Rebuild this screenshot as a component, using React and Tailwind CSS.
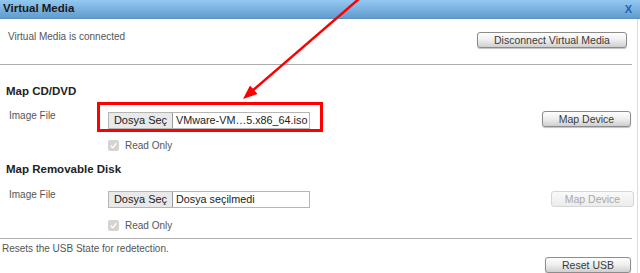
import React from "react";

function Btn({ children, className = "", disabled = false }) {
  return (
    <div
      className={
        "flex items-center justify-center whitespace-nowrap rounded-[3px] border text-[10.5px] leading-none " +
        (disabled
          ? "border-[#d6d6d6] bg-gradient-to-b from-[#fafafa] to-[#ececec] text-[#a8a8a8] "
          : "border-[#8c8c8c] bg-gradient-to-b from-[#fefefe] via-[#eeeeee] to-[#cfcfcf] text-[#3a3a3a] shadow-[0_1px_1px_rgba(0,0,0,0.25)] ") +
        className
      }
    >
      {children}
    </div>
  );
}

function FileInput({ value }) {
  return (
    <div className="flex h-[17px] w-[202px] items-stretch overflow-hidden whitespace-nowrap border border-[#b5b5b5] bg-white text-[11px] leading-none">
      <div className="flex w-[64px] shrink-0 items-center justify-center border-r border-[#9a9a9a] bg-[#e9e9e9] text-[#222]">
        Dosya Seç
      </div>
      <div className="flex items-center pl-[3px] text-[10.8px] text-[#222]">{value}</div>
    </div>
  );
}

function ReadOnly() {
  return (
    <div className="flex h-[12px] items-center pl-[108px]">
      <span className="flex h-[11px] w-[11px] items-center justify-center rounded-[2px] bg-[#d4d4d4]">
        <svg width="9" height="9" viewBox="0 0 10 10">
          <path d="M2 5.2 L4.2 7.4 L8.2 2.6" fill="none" stroke="#fff" strokeWidth="1.6" />
        </svg>
      </span>
      <span className="ml-[6px] text-[10px] text-[#555]">Read Only</span>
    </div>
  );
}

export default function App() {
  return (
    <div className="relative h-[273px] w-[640px] overflow-hidden bg-white font-['Liberation_Sans',Arial,sans-serif]">
      <div className="flex h-[19px] items-center justify-between border-b border-[#5a8fbf] bg-gradient-to-b from-[#93c8f1] to-[#629bcd] pl-[3px] pr-[8px]">
        <span className="text-[11.5px] font-bold text-[#1a1a1a]">Virtual Media</span>
        <span className="text-[11px] font-bold text-[#1a64b8]">X</span>
      </div>

      <div className="h-[254px] w-[638px] border-r border-[#cfe0f2]">
        <div className="flex h-[45px] items-start justify-between pl-[8px] pr-[10px]">
          <span className="mt-[12px] text-[10px] leading-[12px] text-[#555]">Virtual Media is connected</span>
          <Btn className="mt-[13px] h-[16px] w-[150px]">Disconnect Virtual Media</Btn>
        </div>
        <div className="h-px w-[632px] bg-[#adadad]" />

        <div className="mt-[19px] pl-[6px] text-[11.5px] font-bold leading-[14px] text-[#222]">Map CD/DVD</div>
        <div className="mt-[12px] flex items-start justify-between pr-[6px]">
          <div className="flex items-start">
            <span className="w-[108px] pl-[9px] text-[10px] leading-[12px] text-[#555]">Image File</span>
            <div className="mt-[2px]">
              <FileInput value="VMware-VM…5.x86_64.iso" />
            </div>
          </div>
          <Btn className="mt-[1px] h-[16px] w-[89px]">Map Device</Btn>
        </div>
        <div className="mt-[10px]">
          <ReadOnly />
        </div>

        <div className="mt-[11px] pl-[6px] text-[11.5px] font-bold leading-[14px] text-[#222]">Map Removable Disk</div>
        <div className="mt-[13px] flex items-start justify-between pr-[3px]">
          <div className="flex items-start">
            <span className="w-[108px] pl-[9px] text-[10px] leading-[12px] text-[#555]">Image File</span>
            <div className="mt-[2px]">
              <FileInput value="Dosya seçilmedi" />
            </div>
          </div>
          <Btn disabled className="mt-[2px] h-[16px] w-[83px]">Map Device</Btn>
        </div>
        <div className="mt-[11px]">
          <ReadOnly />
        </div>
        <div className="mt-[7px] h-px w-[632px] bg-[#adadad]" />
        <div className="mt-[4px] pl-[2px] text-[10px] leading-[12px] text-[#555]">Resets the USB State for redetection.</div>
        <div className="mt-[2px] flex justify-end pr-[6px]">
          <Btn className="h-[16px] w-[86px]">Reset USB</Btn>
        </div>
      </div>

      {/* Red annotation box */}
      <div className="pointer-events-none absolute left-[97px] top-[102px] h-[30px] w-[226px] border-[3px] border-[#ff0000]" />
      {/* Red arrow */}
      <svg className="pointer-events-none absolute left-0 top-0" width="640" height="273">
        <line x1="360" y1="-2" x2="252" y2="91" stroke="#ff0000" strokeWidth="2.5" />
        <polygon points="243,99 257.5,94 250,85.5" fill="#ff0000" />
      </svg>
    </div>
  );
}
